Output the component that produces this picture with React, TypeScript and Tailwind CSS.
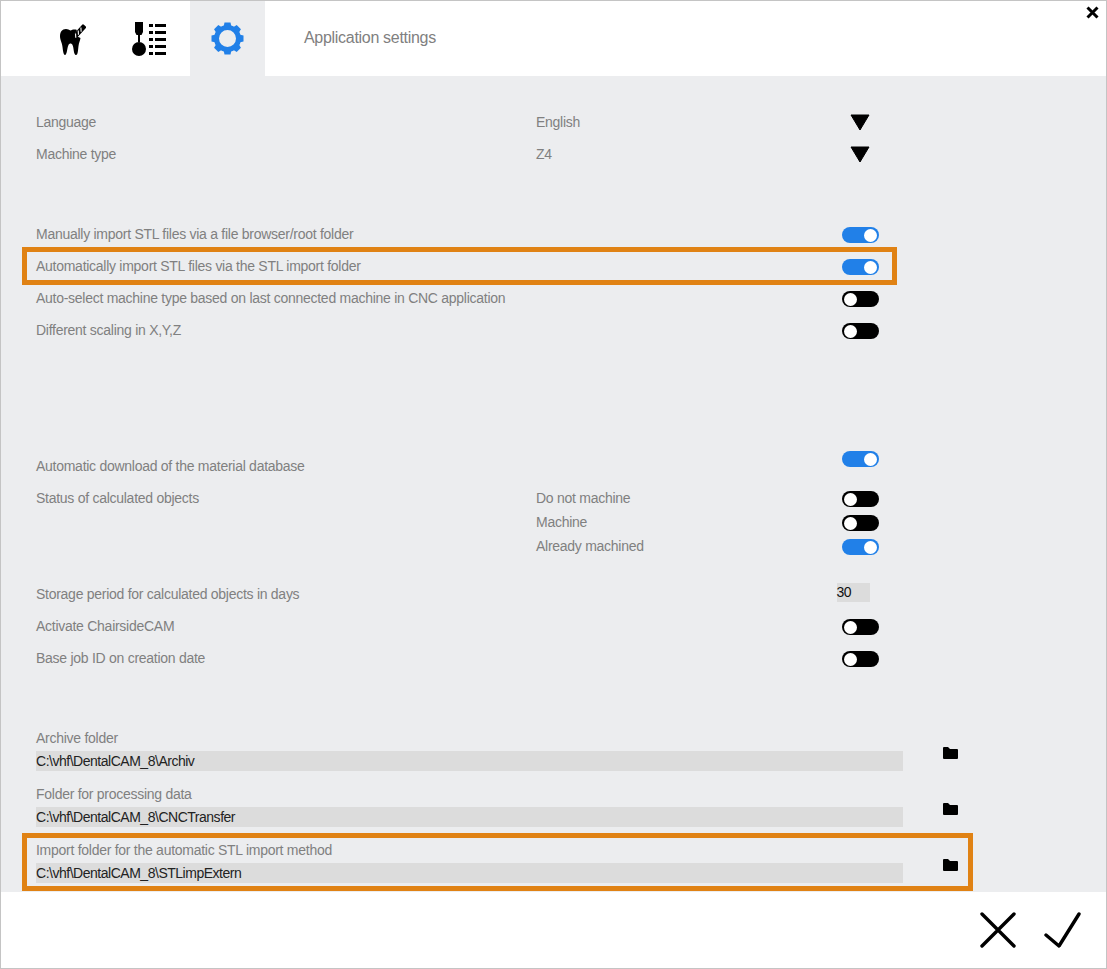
const font = { fontFamily: '"Liberation Sans", Arial, sans-serif' }

function Toggle({ on }: { on?: boolean }) {
  return (
    <div className={`mt-[2px] flex h-4 w-[37px] items-center rounded-full px-[2px] ${on ? "justify-end bg-[#2180e8]" : "justify-start bg-black"}`}>
      <div className="h-[13px] w-[13px] rounded-full bg-white" />
    </div>
  )
}

function Arrow() {
  return (
    <svg className="ml-[-2px] mt-[1px]" width="20" height="17" viewBox="0 0 20 17">
      <path d="M1 1 H19 L10 16 Z" fill="#000" stroke="#000" strokeWidth="1" strokeLinejoin="round" />
    </svg>
  )
}

function Folder() {
  return (
    <svg width="16" height="13" viewBox="0 0 16 13">
      <path d="M1 2 Q1 1 2 1 H6 L8 3 H15 Q16 3 16 4 V12 Q16 13 15 13 H2 Q1 13 1 12 Z" fill="#000" />
    </svg>
  )
}

function Tooth() {
  return (
    <svg width="26" height="34" viewBox="0 0 26 34">
      <path d="M6 7 C2 7 0 10 0 14 C0 18 2 20 2.5 25 C3 29 3.5 33 5 33 C7 33 7 26 8.5 23 C9.5 21 11.5 21 12.5 23 C14 26 13.5 33 16 33 C18 33 18 28 18.5 24 C19 20 20 19 20.5 16 L14 13 L17 8 C14 7 12 8 10.5 8.5 C9 8 8 7 6 7 Z" fill="#000" />
      <g transform="rotate(42 18 11)">
        <rect x="15.5" y="1" width="5" height="19" rx="1" fill="#000" />
        <path d="M16.5 5 L19.5 8 M16.5 9 L19.5 12 M16.5 13 L19.5 16" stroke="#fff" strokeWidth="1.1" />
      </g>
    </svg>
  )
}

function JobList() {
  return (
    <svg width="35" height="34" viewBox="0 0 35 34">
      <path d="M3 0 H11 V10 L9.5 13 H4.5 L3 10 Z" fill="#000" />
      <rect x="6" y="13" width="2" height="7" fill="#000" />
      <circle cx="7" cy="27" r="7" fill="#000" />
      {[3, 10, 17, 24, 31].map((y) => (
        <g key={y}>
          <rect x="17" y={y - 1} width="4" height="3" fill="#000" />
          <rect x="23" y={y - 1} width="11" height="3" fill="#000" />
        </g>
      ))}
    </svg>
  )
}

function Gear() {
  return (
    <svg width="33" height="33" viewBox="0 0 33 33">
      {[0, 45, 90, 135, 180, 225, 270, 315].map((a) => (
        <path key={a} d="M12.5 5 L13.5 0.5 H19.5 L20.5 5 Z" fill="#2180e8" transform={`rotate(${a} 16.5 16.5)`} />
      ))}
      <circle cx="16.5" cy="16.5" r="11" fill="none" stroke="#2180e8" strokeWidth="5" />
    </svg>
  )
}

function Row({ label, value, right }: { label: string; value?: string; right?: React.ReactNode }) {
  return (
    <div className="flex h-8 items-center">
      <div className="w-[500px] shrink-0">{label}</div>
      <div className="w-[306px] shrink-0">{value}</div>
      <div className="flex w-[37px] justify-center">{right}</div>
    </div>
  )
}

function PathField({ label, path, highlight }: { label: string; path: string; highlight?: boolean }) {
  return (
    <div className="relative h-14">
      {highlight && <div className="absolute top-[-7px] left-[-14px] h-[58px] w-[951px] border-[5px] border-[#e08214]" />}
      <div className="flex h-[21px] items-center">{label}</div>
      <div className="mt-[2px] flex items-center">
        <div className="flex h-5 w-[867px] items-center bg-[#dcdcdc] tracking-[-0.48px] text-[#222]">{path}</div>
        <div className="ml-[39px] mt-[-17px]"><Folder /></div>
      </div>
    </div>
  )
}

export default function App() {
  return (
    <div className="flex h-[969px] w-[1107px] flex-col border border-[#c4c4c4] bg-white text-[14px] tracking-[-0.27px] text-[#808080]" style={font}>
      {/* Header tabs */}
      <div className="relative flex h-[75px] shrink-0 items-center">
        <div className="flex w-[126px] justify-center pl-[17px]"><Tooth /></div>
        <div className="flex w-[63px] justify-center"><div className="ml-[-18px]"><JobList /></div></div>
        <div className="flex h-full w-[75px] items-center justify-center bg-[#ecedef]"><Gear /></div>
        <div className="ml-[39px] mt-[-2px] text-[16px] tracking-[-0.3px]">Application settings</div>
        <svg className="absolute top-[5px] right-[7px]" width="13" height="13" viewBox="0 0 13 13">
          <path d="M1.5 1.5 L11.5 11.5 M11.5 1.5 L1.5 11.5" stroke="#000" strokeWidth="3" />
        </svg>
      </div>

      {/* Settings body */}
      <div className="h-[816px] shrink-0 bg-[#ecedef] pt-[30px] pl-[35px]">
        <Row label="Language" value="English" right={<Arrow />} />
        <Row label="Machine type" value="Z4" right={<Arrow />} />

        <div className="mt-[48px]">
          <Row label="Manually import STL files via a file browser/root folder" right={<Toggle on />} />
          <div className="relative">
            <div className="absolute top-[-3px] left-[-14px] h-[38px] w-[875px] border-[5px] border-[#e08214]" />
            <Row label="Automatically import STL files via the STL import folder" right={<Toggle on />} />
          </div>
          <Row label="Auto-select machine type based on last connected machine in CNC application" right={<Toggle />} />
          <Row label="Different scaling in X,Y,Z" right={<Toggle />} />
        </div>

        <div className="mt-[104px]">
          <Row label="Automatic download of the material database" right={<div className="mt-[-16px]"><Toggle on /></div>} />
          <div className="flex">
            <div className="h-8 w-[500px] shrink-0 pt-[6px]">Status of calculated objects</div>
            <div className="pt-[4px]">
              {[
                { label: "Do not machine", on: false },
                { label: "Machine", on: false },
                { label: "Already machined", on: true },
              ].map((s) => (
                <div key={s.label} className="flex h-6 items-center">
                  <div className="w-[306px]">{s.label}</div>
                  <Toggle on={s.on} />
                </div>
              ))}
            </div>
          </div>
        </div>

        <div className="mt-[20px]">
          <Row
            label="Storage period for calculated objects in days"
            right={<div className="ml-[-15px] mt-[-3px] flex h-[19px] w-[33px] shrink-0 items-center bg-[#dcdcdc] tracking-[-0.5px] text-[#111]">30</div>}
          />
          <Row label="Activate ChairsideCAM" right={<Toggle />} />
          <Row label="Base job ID on creation date" right={<Toggle />} />
        </div>

        <div className="mt-[54px]">
          <PathField label="Archive folder" path="C:\vhf\DentalCAM_8\Archiv" />
          <PathField label="Folder for processing data" path="C:\vhf\DentalCAM_8\CNCTransfer" />
          <PathField label="Import folder for the automatic STL import method" path="C:\vhf\DentalCAM_8\STLimpExtern" highlight />
        </div>
      </div>

      {/* Footer actions */}
      <div className="flex flex-1 items-center justify-end gap-[28px] pr-[25px]">
        <svg width="36" height="36" viewBox="0 0 36 36">
          <path d="M2 2 L34 34 M34 2 L2 34" stroke="#000" strokeWidth="3.4" strokeLinecap="round" />
        </svg>
        <svg width="37" height="36" viewBox="0 0 37 36">
          <path d="M2 23 L15 34 L35 2" fill="none" stroke="#000" strokeWidth="3.4" strokeLinecap="round" strokeLinejoin="round" />
        </svg>
      </div>
    </div>
  )
}
